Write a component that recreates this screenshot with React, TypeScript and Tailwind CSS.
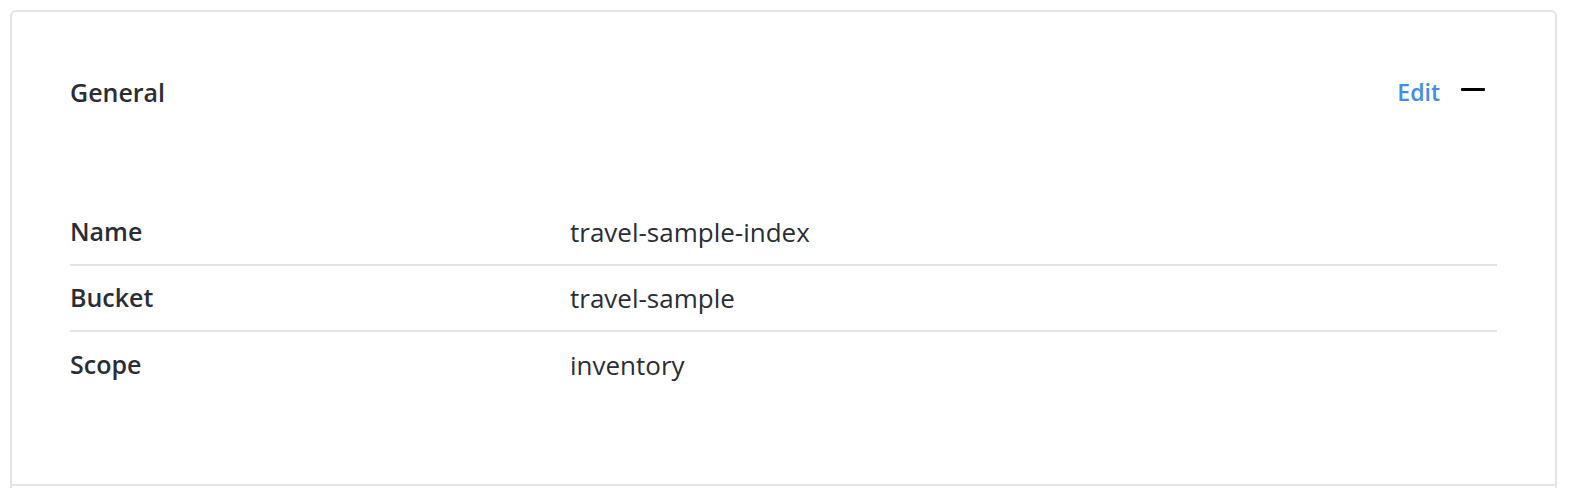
const rows = [
  { label: 'Name', value: 'travel-sample-index' },
  { label: 'Bucket', value: 'travel-sample' },
  { label: 'Scope', value: 'inventory' },
];

export default function App() {
  return (
    <div className="h-[488px] overflow-hidden bg-white pl-[10px] pt-[10px] font-['Open_Sans',_sans-serif] text-[#2b2d36]">
      <div className="h-[600px] w-[1547px] rounded-[6px] border-2 border-[#e4e4e4] bg-white">
        <section className="h-[474px] border-b-2 border-[#e4e4e4] px-[58px] pt-[64px]">
          {/* header */}
          <div className="flex h-[32px] items-center justify-between">
            <h2 className="text-[25px] font-semibold leading-[32px]">General</h2>
            <div className="flex items-center gap-[21px] pr-[12px]">
              <button className="text-[23px] font-semibold leading-[32px] text-[#428ee0]">Edit</button>
              <span className="mt-[-6px] block h-[3px] w-[24px] rounded-[1px] bg-black" />
            </div>
          </div>

          <dl className="mt-[92px]">
            {rows.map((row, i) => (
              <div
                key={row.label}
                className={`flex h-[66px] items-center ${i < rows.length - 1 ? 'border-b-2 border-[#e4e4e4]' : ''}`}
              >
                <dt className="w-[500px] text-[25px] font-semibold">{row.label}</dt>
                <dd className="text-[26px]">{row.value}</dd>
              </div>
            ))}
          </dl>
        </section>
      </div>
    </div>
  );
}
